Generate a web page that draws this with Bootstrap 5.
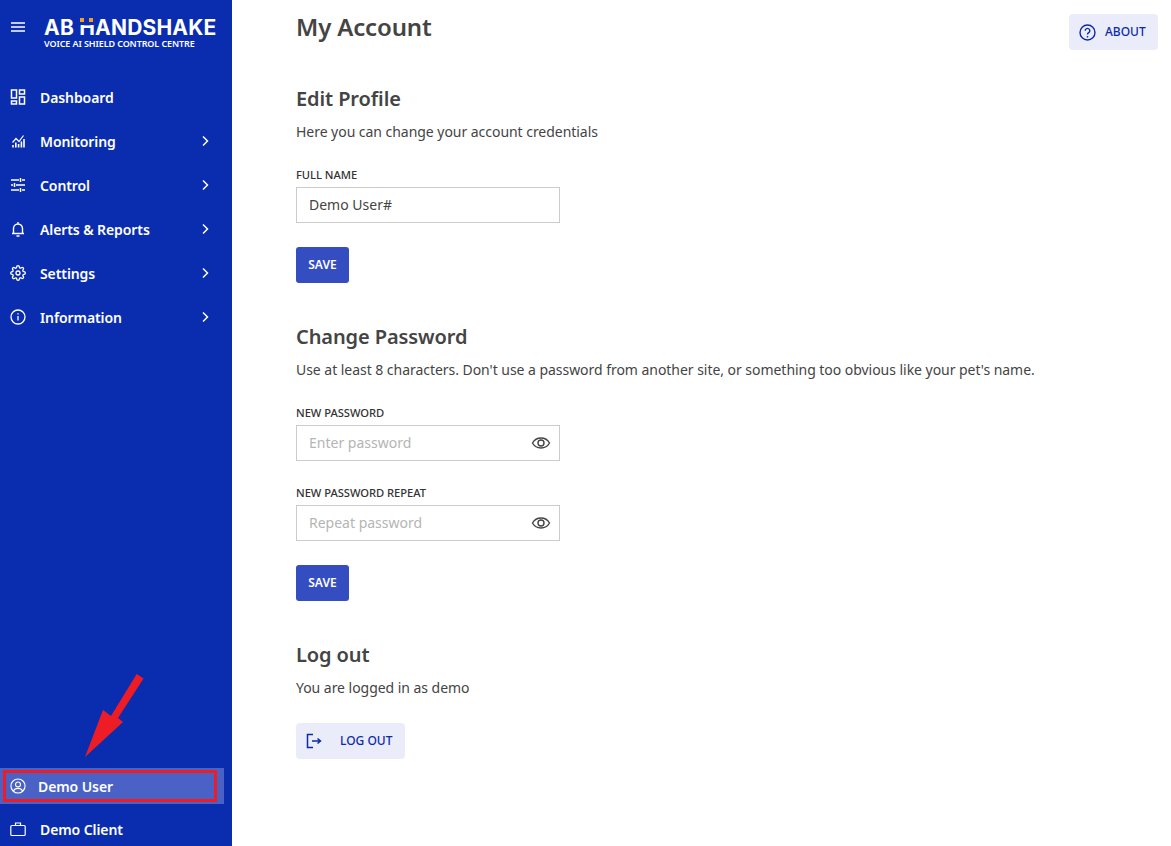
<!DOCTYPE html>
<html lang="en">
<head>
  <meta charset="UTF-8">
  <meta name="viewport" content="width=device-width, initial-scale=1">
  <title>My Account</title>
  <link href="https://cdn.jsdelivr.net/npm/bootstrap@5.3.3/dist/css/bootstrap.min.css" rel="stylesheet">
  <style>
    html, body { height: 100%; overflow: hidden; }
    body { font-family: "Noto Sans", sans-serif; font-size: 14px; letter-spacing: -.04px; color: #444; background: #fff; }
    .sidebar { width: 232px; height: 846px; background: #0a2db0; color: #fff; flex: none; position: relative; }
    .brand { height: 75px; padding: 17px 0 0 11px; }
    .brand svg { margin-top: 4px; }
    .logo { margin-left: 19px; }
    .logo-name { font-family: Inter, sans-serif; font-weight: 700; font-size: 21px; line-height: 21px; letter-spacing: .2px; white-space: nowrap; }
    .logo-h { position: relative; display: inline-block; }
    .logo-h::before { content: ""; position: absolute; left: 1px; right: 1px; top: 2px; height: 6px; background: #0a2db0; }
    .logo-h::after { content: ""; position: absolute; left: 1px; top: 1px; width: 4px; height: 4px; background: #f0a030; box-shadow: 9px 0 0 #f0a030; }
    .logo-sub { font-size: 9px; font-weight: 600; line-height: 11px; letter-spacing: -.1px; white-space: nowrap; }
    .side-item { height: 44px; padding: 0 21px 0 10px; display: flex; align-items: center; color: #fff; font-weight: 600; font-size: 14px; letter-spacing: -.09px; text-decoration: none; }
    .side-item .ico { width: 16px; height: 16px; flex: none; margin-right: 14px; }
    .side-item .chev { margin-left: auto; width: 12px; height: 12px; }
    .user-row { height: 36px; width: 224px; background: #4a62c6; padding: 2px 7px 2px 3px; margin-bottom: 3px; }
    .user-box { height: 32px; border: 3px solid #ee1c25; display: flex; align-items: center; padding-left: 4px; font-weight: 600; letter-spacing: -.09px; color: #fff; }
    .user-box svg { width: 16px; height: 16px; margin-right: 12px; flex: none; }
    .client { height: 44px; margin-bottom: -5px; }
    .arrow { position: absolute; left: 80px; top: 670px; }
    .main { padding: 0 0 0 64px; flex: 1; position: relative; }
    h1 { font-size: 24px; font-weight: 600; letter-spacing: -.15px; color: #444; line-height: 32px; margin: 11px 0 43px; }
    h2 { font-size: 20px; font-weight: 600; letter-spacing: -.1px; color: #444; line-height: 26px; margin: 0 0 10px; }
    .main p { line-height: 20px; margin: 0 0 25px; }
    .field-label { display: block; font-size: 11.2px; font-weight: 500; color: #333; line-height: 16px; margin-bottom: 4px; text-transform: uppercase; }
    .field { width: 264px; height: 36px; position: relative; margin-bottom: 24px; }
    .field .form-control { height: 36px; border-radius: 0; border: 1px solid #ccc; padding: 0 12px 1px; font-size: 14px; color: #444; box-shadow: none; }
    .field .form-control::placeholder { color: #b5b5b5; }
    .field svg { position: absolute; right: 9px; top: 9px; width: 20px; height: 18px; }
    .btn-save { width: 53px; height: 36px; padding: 0; background: #344dc0; border: 0; border-radius: 3px; color: #fff; font-size: 12px; font-weight: 600; }
    .btn-save:hover { background: #344dc0; color: #fff; }
    .section { margin-bottom: 41px; }
    .btn-soft { height: 36px; padding: 0; background: #eaedf9; border: 0; border-radius: 4px; color: #0c2aa8; font-size: 12px; font-weight: 500; display: inline-flex; align-items: center; }
    .btn-soft:hover { background: #eaedf9; color: #0c2aa8; }
    .btn-about { position: absolute; top: 14px; left: 837px; width: 89px; padding-left: 10px; }
    .btn-about svg { width: 17px; height: 17px; margin-right: 9px; }
    .btn-logout { width: 109px; padding-left: 10px; }
    .btn-logout svg { width: 16px; height: 16px; margin-right: 18px; }
  </style>
</head>
<body>
<div class="d-flex">

  <!-- Sidebar -->
  <nav class="sidebar d-flex flex-column">
    <div class="brand d-flex align-items-start">
      <svg width="14" height="12" viewBox="0 0 14 12" fill="none" stroke="#fff" stroke-width="1.4"><path d="M0 2h14M0 6h14M0 10h14"/></svg>
      <div class="logo">
        <div class="logo-name">AB <span class="logo-h">H</span>ANDSHAKE</div>
        <div class="logo-sub">VOICE AI SHIELD CONTROL CENTRE</div>
      </div>
    </div>

    <a class="side-item" href="#">
      <svg class="ico" viewBox="0 0 16 16" fill="none" stroke="#fff" stroke-width="1.5"><rect x="1.500" y="1" width="5" height="8"/><rect x="9.500" y="1" width="5" height="4"/><rect x="1.500" y="12" width="5" height="3"/><rect x="9.500" y="8" width="5" height="7"/></svg>
      Dashboard
    </a>
    <a class="side-item" href="#">
      <svg class="ico" viewBox="0 0 16 16" fill="none" stroke="#fff" stroke-width="1.2"><path d="M2.500 9.500L6 5.500l3 3 4.500-6"/><path d="M3 14.500v-2.500M5.800 14.500v-5M8.600 14.500V11M11.400 14.500V8.500M14 14.500V6" stroke-width="1.600"/></svg>
      Monitoring
      <svg class="chev" viewBox="0 0 12 12" fill="none" stroke="#fff" stroke-width="1.5"><path d="M4 1.500L8.500 6 4 10.500"/></svg>
    </a>
    <a class="side-item" href="#">
      <svg class="ico" viewBox="0 0 16 16" fill="none" stroke="#fff" stroke-width="1.500"><path d="M1 3h8M12 3h3M10.500 1v4M1 8h2M6 8h9M4.500 6v4M1 13h8M12 13h3M10.500 11v4"/></svg>
      Control
      <svg class="chev" viewBox="0 0 12 12" fill="none" stroke="#fff" stroke-width="1.5"><path d="M4 1.500L8.500 6 4 10.500"/></svg>
    </a>
    <a class="side-item" href="#">
      <svg class="ico" viewBox="0 0 16 16" fill="none" stroke="#fff" stroke-width="1.400"><path d="M2 12.500h12M3.500 12.500V7.500a4.500 4.500 0 0 1 9 0v5M8 1v2M6.500 15h3"/></svg>
      Alerts &amp; Reports
      <svg class="chev" viewBox="0 0 12 12" fill="none" stroke="#fff" stroke-width="1.5"><path d="M4 1.500L8.500 6 4 10.500"/></svg>
    </a>
    <a class="side-item" href="#">
      <svg class="ico" viewBox="0 0 24 24" fill="none" stroke="#fff" stroke-width="2"><circle cx="12" cy="12" r="3"/><path d="M19.400 15a1.650 1.650 0 0 0 .33 1.820l.06.06a2 2 0 0 1 0 2.830 2 2 0 0 1-2.830 0l-.06-.06a1.650 1.650 0 0 0-1.820-.33 1.650 1.650 0 0 0-1 1.510V21a2 2 0 0 1-2 2 2 2 0 0 1-2-2v-.09A1.650 1.650 0 0 0 9 19.400a1.650 1.650 0 0 0-1.820.33l-.06.06a2 2 0 0 1-2.830 0 2 2 0 0 1 0-2.830l.06-.06a1.650 1.650 0 0 0 .33-1.820 1.650 1.650 0 0 0-1.510-1H3a2 2 0 0 1-2-2 2 2 0 0 1 2-2h.09A1.650 1.650 0 0 0 4.600 9a1.650 1.650 0 0 0-.33-1.820l-.06-.06a2 2 0 0 1 0-2.830 2 2 0 0 1 2.830 0l.06.06a1.650 1.650 0 0 0 1.820.33H9a1.650 1.650 0 0 0 1-1.510V3a2 2 0 0 1 2-2 2 2 0 0 1 2 2v.09a1.650 1.650 0 0 0 1 1.510 1.650 1.650 0 0 0 1.820-.33l.06-.06a2 2 0 0 1 2.830 0 2 2 0 0 1 0 2.830l-.06.06a1.650 1.650 0 0 0-.33 1.820V9a1.650 1.650 0 0 0 1.510 1H21a2 2 0 0 1 2 2 2 2 0 0 1-2 2h-.09a1.650 1.650 0 0 0-1.510 1z"/></svg>
      Settings
      <svg class="chev" viewBox="0 0 12 12" fill="none" stroke="#fff" stroke-width="1.5"><path d="M4 1.500L8.500 6 4 10.500"/></svg>
    </a>
    <a class="side-item" href="#">
      <svg class="ico" viewBox="0 0 16 16" fill="none" stroke="#fff" stroke-width="1.300"><circle cx="8" cy="8" r="7"/><path d="M8 7v4.500M8 4.200v1.300"/></svg>
      Information
      <svg class="chev" viewBox="0 0 12 12" fill="none" stroke="#fff" stroke-width="1.5"><path d="M4 1.500L8.500 6 4 10.500"/></svg>
    </a>

    <div class="mt-auto">
      <div class="user-row">
        <div class="user-box">
          <svg viewBox="0 0 17 17" fill="none" stroke="#fff" stroke-width="1.200"><circle cx="8.500" cy="8.500" r="7.500"/><circle cx="8.500" cy="6.800" r="2.600"/><path d="M3.500 14c1-2.200 2.800-3 5-3s4 .8 5 3"/></svg>
          Demo User
        </div>
      </div>
      <a class="side-item client" href="#">
        <svg class="ico" viewBox="0 0 16 16" fill="none" stroke="#fff" stroke-width="1.200"><rect x=".8" y="4.500" width="14.400" height="10" rx="1"/><path d="M5.500 4.500V2h5v2.500"/></svg>
        Demo Client
      </a>
    </div>

    <!-- annotation arrow -->
    <svg class="arrow" width="70" height="92" viewBox="0 0 70 92"><path d="M56.700 4L63.500 8.500 38 48l5 4L5 87l18-47 8 6z" fill="#ee1c25"/></svg>
  </nav>

  <!-- Main content -->
  <main class="main">
    <button class="btn btn-soft btn-about" type="button">
      <svg viewBox="0 0 17 17" fill="none" stroke="#0c2aa8" stroke-width="1.400"><circle cx="8.500" cy="8.500" r="7.500"/><path d="M6.200 6.700a2.300 2.300 0 1 1 3.500 2c-.8.500-1.200.9-1.200 1.800M8.500 12v1.400"/></svg>
      ABOUT
    </button>

    <h1>My Account</h1>

    <section class="section">
      <h2>Edit Profile</h2>
      <p>Here you can change your account credentials</p>
      <label class="field-label" for="fullName">Full name</label>
      <div class="field"><input class="form-control" id="fullName" type="text" value="Demo User#"></div>
      <button class="btn btn-save" type="button">SAVE</button>
    </section>

    <section class="section">
      <h2>Change Password</h2>
      <p>Use at least 8 characters. Don't use a password from another site, or something too obvious like your pet's name.</p>
      <label class="field-label" for="pw1">New password</label>
      <div class="field">
        <input class="form-control" id="pw1" type="password" placeholder="Enter password">
        <svg viewBox="0 0 20 18" fill="none" stroke="#444" stroke-width="1.400"><path d="M1.500 9C3.500 5.500 6.500 4 10 4s6.500 1.500 8.500 5c-2 3.500-5 5-8.500 5s-6.500-1.500-8.500-5z"/><circle cx="10" cy="9" r="3"/></svg>
      </div>
      <label class="field-label" for="pw2">New password repeat</label>
      <div class="field">
        <input class="form-control" id="pw2" type="password" placeholder="Repeat password">
        <svg viewBox="0 0 20 18" fill="none" stroke="#444" stroke-width="1.400"><path d="M1.500 9C3.500 5.500 6.500 4 10 4s6.500 1.500 8.500 5c-2 3.500-5 5-8.500 5s-6.500-1.500-8.500-5z"/><circle cx="10" cy="9" r="3"/></svg>
      </div>
      <button class="btn btn-save" type="button">SAVE</button>
    </section>

    <section>
      <h2>Log out</h2>
      <p>You are logged in as demo</p>
      <button class="btn btn-soft btn-logout" type="button">
        <svg viewBox="0 0 16 16" fill="none" stroke="#0c2aa8" stroke-width="1.500"><path d="M7 1.500H1.500v13H7M6 8h8.500M11.500 5.500L14.500 8l-3 2.500"/></svg>
        LOG OUT
      </button>
    </section>
  </main>
</div>
<script src="https://cdn.jsdelivr.net/npm/bootstrap@5.3.3/dist/js/bootstrap.bundle.min.js"></script>
</body>
</html>
